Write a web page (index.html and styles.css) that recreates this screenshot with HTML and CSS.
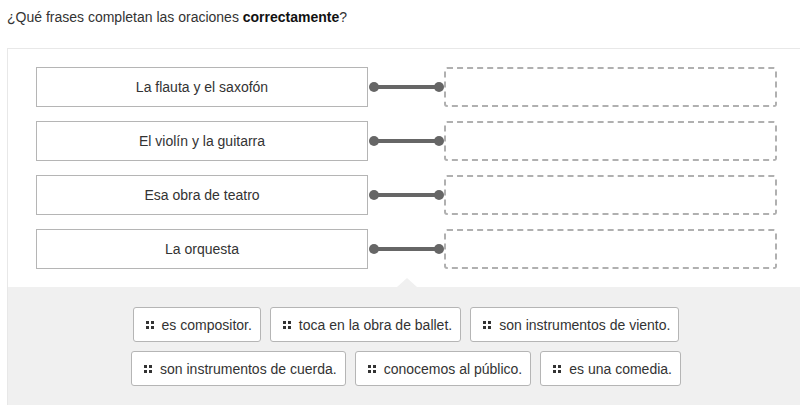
FILE: index.html
```html
<!DOCTYPE html>
<html lang="es">
<head>
    <meta charset="UTF-8">
    <title>Unir frases</title>
    <link rel="stylesheet" href="styles.css">
</head>
<body>

<p class="question">¿Qué frases completan las oraciones <strong>correctamente</strong>?</p>

<div class="match-box">
    <div class="pairs">
        <div class="pair">
            <div class="prompt">La flauta y el saxofón</div>
            <div class="link"><span class="dot"></span><span class="bar"></span><span class="dot"></span></div>
            <div class="drop"></div>
        </div>
        <div class="pair">
            <div class="prompt">El violín y la guitarra</div>
            <div class="link"><span class="dot"></span><span class="bar"></span><span class="dot"></span></div>
            <div class="drop"></div>
        </div>
        <div class="pair">
            <div class="prompt">Esa obra de teatro</div>
            <div class="link"><span class="dot"></span><span class="bar"></span><span class="dot"></span></div>
            <div class="drop"></div>
        </div>
        <div class="pair">
            <div class="prompt">La orquesta</div>
            <div class="link"><span class="dot"></span><span class="bar"></span><span class="dot"></span></div>
            <div class="drop"></div>
        </div>
    </div>

    <div class="pool">
        <div class="chips">
            <div class="chip"><span class="grip"></span>es compositor.</div>
            <div class="chip"><span class="grip"></span>toca en la obra de ballet.</div>
            <div class="chip"><span class="grip"></span>son instrumentos de viento.</div>
            <div class="chip"><span class="grip"></span>son instrumentos de cuerda.</div>
            <div class="chip"><span class="grip"></span>conocemos al público.</div>
            <div class="chip"><span class="grip"></span>es una comedia.</div>
        </div>
    </div>
</div>

</body>
</html>
```

FILE: styles.css
```css
html, body {
    overflow: hidden;
}

body {
    font-family: 'Liberation Sans', Arial, sans-serif;
    font-size: 14px;
    margin: 0;
    padding: 0 0 0 7px;
    background: #fff;
    color: #333;
    width: 800px;
}

.question {
    margin: 0;
    padding-top: 9px;
    line-height: 17px;
    height: 48px;
    box-sizing: border-box;
    color: #333;
}

.question strong {
    color: #111;
}

.match-box {
    width: 798px;
    border: 1px solid #e8e8e8;
    border-bottom: none;
    box-sizing: border-box;
}

.pairs {
    display: flex;
    flex-direction: column;
    gap: 14px;
    padding: 18px 27px 18px 28px;
}

.pair {
    display: grid;
    grid-template-columns: 332px 76px 1fr;
    height: 40px;
}

.prompt {
    border: 1px solid #b5b5b5;
    display: flex;
    align-items: center;
    justify-content: center;
    color: #333;
}

.link {
    display: flex;
    align-items: center;
    padding-left: 1px;
}

.dot {
    width: 10px;
    height: 10px;
    border-radius: 50%;
    background: #666;
    flex: none;
}

.bar {
    flex: 1;
    height: 4px;
    background: #666;
    margin: 0 -2px;
}

.drop {
    border: 2px dashed #b0b0b0;
    border-radius: 3px;
}

.pool {
    position: relative;
    background: #f0f0f0;
    padding: 20px 0 19px;
}

.pool::before {
    content: "";
    position: absolute;
    top: -9px;
    left: 389px;
    border-left: 10px solid transparent;
    border-right: 10px solid transparent;
    border-bottom: 9px solid #f0f0f0;
}

.chips {
    display: flex;
    flex-wrap: wrap;
    justify-content: center;
    gap: 9px;
    max-width: 600px;
    margin: 0 auto;
}

.chip {
    display: flex;
    align-items: center;
    height: 35px;
    box-sizing: border-box;
    padding: 0 8px 0 12px;
    background: #fff;
    border: 1px solid #b5b5b5;
    border-radius: 3px;
    color: #333;
}

.grip {
    width: 8px;
    height: 8px;
    margin-right: 8px;
    background:
        linear-gradient(#333, #333) 0 0 / 3px 3px no-repeat,
        linear-gradient(#333, #333) 5px 0 / 3px 3px no-repeat,
        linear-gradient(#333, #333) 0 5px / 3px 3px no-repeat,
        linear-gradient(#333, #333) 5px 5px / 3px 3px no-repeat;
}
```
